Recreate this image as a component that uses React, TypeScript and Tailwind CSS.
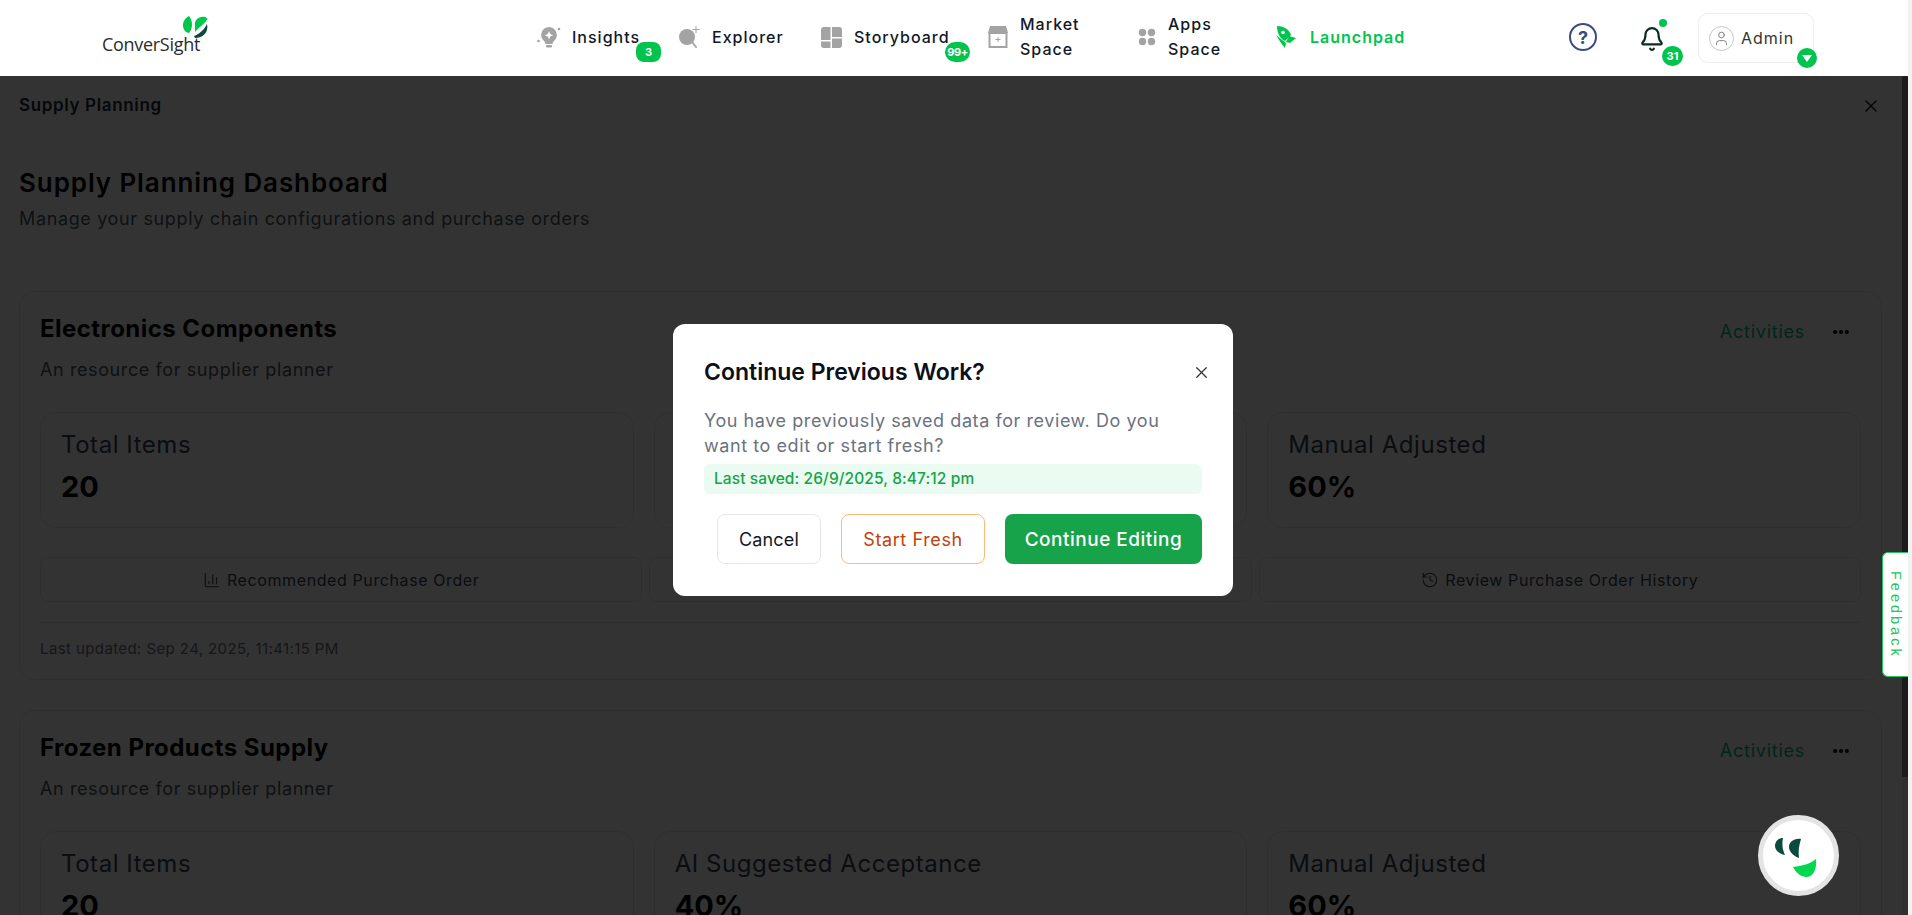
import { BarChart3, ClipboardList, History, X, MoreHorizontal, Bell, User } from "lucide-react";

const font = "font-['Inter','Noto_Sans',sans-serif]";

function Logo() {
  return (
    <div className="relative w-[110px] h-[42px]">
      <span className="absolute left-0 top-[17px] text-[18px] leading-[22px] tracking-[-0.3px] text-[#2b2b2b] font-['Open_Sans',sans-serif]">ConverSight</span>
      <svg className="absolute left-[79px] top-0" width="30" height="30" viewBox="0 0 30 30">
        <path d="M8 0 C2 3 0 10 4 15 C5 16 7 17 8 17 C12 12 12 5 8 0Z" fill="#00c64a" />
        <path d="M14 10 C13 5 17 0 24 1 C27 2 27 3 25 5 C22 9 18 11 14 16Z" fill="#00c64a" />
        <path d="M26 8 C28 16 22 22 14 22 L13 20 C18 18 23 14 26 8Z" fill="#0b4a3a" />
      </svg>
    </div>
  );
}

function Badge({ text, className }: { text: string; className: string }) {
  return (
    <span className={"absolute flex items-center justify-center bg-[#00c44d] text-white text-[11px] font-bold " + className}>
      {text}
    </span>
  );
}

function InsightsIcon() {
  return (
    <svg width="24" height="24" viewBox="0 0 24 24">
      <path d="M12 2a8 8 0 0 0-5 14c1 1 1.500 2 1.500 3h7c0-1 .5-2 1.500-3a8 8 0 0 0-5-14z" fill="#a3a3a3" />
      <path d="M12 6l1.200 3 3 1.200-3 1.200-1.200 3-1.200-3-3-1.200 3-1.200z" fill="#fff" />
      <rect x="9" y="20" width="6" height="2.500" rx="1" fill="#a3a3a3" />
      <circle cx="1.500" cy="16" r="1.300" fill="#a3a3a3" />
      <circle cx="22" cy="4" r="1.300" fill="#a3a3a3" />
    </svg>
  );
}

function ExplorerIcon() {
  return (
    <svg width="24" height="24" viewBox="0 0 24 24">
      <circle cx="10" cy="12" r="8" fill="#a3a3a3" />
      <path d="M15 17l4 5" stroke="#a3a3a3" strokeWidth="2" strokeLinecap="round" />
      <path d="M19 1v7M15.500 4.500h7" stroke="#a3a3a3" strokeWidth="1" />
    </svg>
  );
}

function StoryboardIcon() {
  return (
    <svg width="21" height="21" viewBox="0 0 21 21">
      <path d="M3 0h6.500v13H0V3a3 3 0 0 1 3-3z" fill="#a3a3a3" />
      <path d="M11 0h7a3 3 0 0 1 3 3v7H11z" fill="#a3a3a3" />
      <path d="M11 11.500h10V18a3 3 0 0 1-3 3h-7z" fill="#a3a3a3" />
      <path d="M0 14.500h9.500V21H3a3 3 0 0 1-3-3z" fill="#a3a3a3" />
    </svg>
  );
}

function MarketIcon() {
  return (
    <svg width="20" height="22" viewBox="0 0 20 22">
      <path d="M2 0h16l2 7H0z" fill="#a3a3a3" />
      <rect x="1.500" y="7" width="17" height="14" fill="#fff" stroke="#a3a3a3" strokeWidth="2" />
      <path d="M10 11v5M7.500 13.500h5" stroke="#a3a3a3" strokeWidth="1" />
    </svg>
  );
}

function AppsIcon() {
  return (
    <svg width="18" height="18" viewBox="0 0 18 18" fill="#a3a3a3">
      <circle cx="4.500" cy="4.500" r="3.700" />
      <circle cx="13.500" cy="4.500" r="3.700" />
      <circle cx="4.500" cy="13.500" r="3.700" />
      <circle cx="13.500" cy="13.500" r="3.700" />
    </svg>
  );
}

function RocketIcon() {
  return (
    <svg width="21" height="22" viewBox="0 0 21 22">
      <path d="M1 0c6 0 12 3 14 9l-6 6C4 13 1 7 1 0z" fill="#00c44d" />
      <path d="M0 9l5 8 4 5 1-5z" fill="#00c44d" />
      <path d="M13 10l7 2-6 5-4-1z" fill="#00c44d" />
      <circle cx="7" cy="6.500" r="1.800" fill="#fff" />
    </svg>
  );
}

const navText = "text-[16px] font-medium text-[#111827] tracking-[1px] whitespace-nowrap";

function Header() {
  return (
    <header className="h-[76px] shrink-0 bg-white flex items-center pb-[2px]">
      <div className="ml-[102px] w-[435px]">
        <Logo />
      </div>
      <div className="w-[140px] flex items-center gap-[11px] relative">
        <InsightsIcon />
        <span className={navText}>Insights</span>
        <Badge text="3" className="left-[99px] top-[17px] w-[25px] h-[20px] rounded-[8px]" />
      </div>
      <div className="w-[144px] flex items-center gap-[11px]">
        <ExplorerIcon />
        <span className={navText}>Explorer</span>
      </div>
      <div className="w-[167px] flex items-center gap-[12px] relative">
        <StoryboardIcon />
        <span className={navText}>Storyboard</span>
        <Badge text="99+" className="left-[124px] top-[17px] w-[25px] h-[20px] rounded-[10px] tracking-[-0.5px]" />
      </div>
      <div className="w-[150px] flex items-center gap-[12px]">
        <MarketIcon />
        <span className="text-[16px] leading-[25px] font-medium text-[#111827] tracking-[1px] w-[70px]">Market Space</span>
      </div>
      <div className="w-[138px] flex items-center gap-[12px]">
        <AppsIcon />
        <span className="text-[16px] leading-[25px] font-medium text-[#111827] tracking-[1px] w-[60px]">Apps Space</span>
      </div>
      <div className="w-[293px] flex items-center gap-[13px]">
        <RocketIcon />
        <span className="text-[16px] font-semibold text-[#00c44d] tracking-[1px]">Launchpad</span>
      </div>
      <div className="w-[68px] flex justify-start">
        <div className="w-[28px] h-[28px] rounded-full border-[2.5px] border-[#3b4a82] flex items-center justify-center text-[#3b4a82] text-[18px] font-bold">?</div>
      </div>
      <div className="relative w-[61px] h-[40px] flex items-start">
        <Bell className="ml-[2px] mt-[9px] text-[#0b2e24]" size={26} strokeWidth={2} />
        <span className="absolute left-[22px] top-[2px] w-[8px] h-[8px] rounded-full bg-[#00c44d]" />
        <Badge text="31" className="left-[25px] top-[29px] w-[21px] h-[20px] rounded-full" />
      </div>
      <div className="relative w-[116px] h-[50px] mt-[2px] border border-[#ececec] rounded-[10px] flex items-center pl-[10px] gap-[7px]">
        <span className="w-[25px] h-[25px] rounded-full border border-[#c8c8c8] flex items-center justify-center">
          <User size={17} strokeWidth={1.3} className="text-[#777]" />
        </span>
        <span className="text-[16px] text-[#333] tracking-[1px]">Admin</span>
        <span className="absolute left-[98px] top-[34px] w-[20px] h-[20px] rounded-full bg-[#00c44d] flex items-center justify-center">
          <span className="w-0 h-0 border-l-[5px] border-r-[5px] border-t-[7px] border-l-transparent border-r-transparent border-t-white" />
        </span>
      </div>
    </header>
  );
}

function Stat({ label, value }: { label: string; value: string }) {
  return (
    <div className="h-[116px] border border-gray-200 rounded-2xl pl-[20px] pt-[18px]">
      <div className="text-[24px] leading-[28px] text-[#374151] tracking-[0.55px]">{label}</div>
      <div className="text-[29px] leading-[36px] mt-[10px] font-bold text-black">{value}</div>
    </div>
  );
}

function ActionButton({ icon, label }: { icon: React.ReactNode; label: string }) {
  return (
    <div className="h-[45px] border border-gray-200 rounded-lg flex items-center justify-center gap-[6px] text-[16px] text-[#374151] tracking-[0.6px]">
      {icon}
      <span>{label}</span>
    </div>
  );
}

function ResourceCard({ title }: { title: string }) {
  return (
    <section className="border border-gray-200 rounded-2xl h-[389px] mb-[30px] shrink-0 px-[20px] pt-[19px]">
      <div className="flex items-start justify-between">
        <div>
          <h2 className="text-[24px] leading-[36px] font-bold text-black tracking-[0.45px]">{title}</h2>
          <p className="mt-[10px] text-[18px] leading-[26px] text-[#4b5563] tracking-[0.6px]">An resource for supplier planner</p>
        </div>
        <div className="flex items-center gap-[26px] mt-[8px] pr-[10px]">
          <span className="text-[18px] leading-[26px] text-[#05b884] tracking-[0.75px]">Activities</span>
          <MoreHorizontal size={20} strokeWidth={3} className="text-black" />
        </div>
      </div>
      <div className="grid grid-cols-3 gap-5 mt-[29px]">
        <Stat label="Total Items" value="20" />
        <Stat label="AI Suggested Acceptance" value="40%" />
        <Stat label="Manual Adjusted" value="60%" />
      </div>
      <div className="grid grid-cols-3 gap-[7px] mt-[29px]">
        <ActionButton icon={<BarChart3 size={18} strokeWidth={1.5} />} label="Recommended Purchase Order" />
        <ActionButton icon={<ClipboardList size={18} strokeWidth={1.5} />} label="Review Purchase Order" />
        <ActionButton icon={<History size={18} strokeWidth={1.5} />} label="Review Purchase Order History" />
      </div>
      <div className="border-t border-gray-200 mt-[20px] pt-[15px] text-[15px] leading-[22px] text-[#6b7280] tracking-[0.4px]">
        Last updated: Sep 24, 2025, 11:41:15 PM
      </div>
    </section>
  );
}

function Modal() {
  return (
    <div className="absolute left-[673px] top-[324px] z-30 w-[560px] h-[272px] bg-white rounded-xl px-[31px] pt-[30px]">
      <div className="flex items-center justify-between h-[36px]">
        <h3 className="text-[23px] font-semibold tracking-[0px] text-[#0b0f19]">Continue Previous Work?</h3>
        <X size={19} strokeWidth={1.5} className="text-[#333] -mr-[9px]" />
      </div>
      <p className="mt-[18px] text-[18px] leading-[25px] text-[#6b7280] tracking-[0.57px]">
        You have previously saved data for review. Do you want to edit or start fresh?
      </p>
      <div className="mt-[6px] h-[30px] bg-[#ecfbf2] rounded-md flex items-center pl-[10px] text-[15.5px] font-medium text-[#16a34a] tracking-[0.1px]">
        Last saved: 26/9/2025, 8:47:12 pm
      </div>
      <div className="flex justify-end gap-5 mt-[20px]">
        <button className="w-[104px] h-[50px] bg-white border border-gray-200 rounded-lg text-[18px] tracking-[0.2px] text-[#111827]">Cancel</button>
        <button className="w-[144px] h-[50px] bg-white border border-[#fdba74] rounded-lg pt-[1px] text-[18px] tracking-[0.6px] text-[#c2410c]">Start Fresh</button>
        <button className="w-[197px] h-[50px] bg-[#16a34a] rounded-lg pt-[2px] text-[19px] tracking-[0.5px] font-medium text-white">Continue Editing</button>
      </div>
    </div>
  );
}

function Bot() {
  return (
    <div className="absolute left-[1758px] top-[815px] z-30 w-[81px] h-[81px] rounded-full bg-white border-[5px] border-[#e4e4e4] flex items-center justify-center">
      <svg width="50" height="50" viewBox="0 0 50 50">
        <path d="M9 7C3 7 1 12 1 15C1 19 5 23 11 24C8 18 8 12 9 7Z" fill="#0b4a3c" />
        <path d="M27 8C20 7 15 11 15 16C15 21 20 25 25 27C24 21 25 14 27 8Z" fill="#0b4a3c" />
        <path d="M42 28C36 33 28 35 19 36C22 42 27 46 33 46C40 46 43 36 42 28Z" fill="#00d94f" />
      </svg>
    </div>
  );
}

export default function App() {
  return (
    <div className={"relative w-[1912px] h-[915px] overflow-hidden bg-[#f2f2f2] " + font}>
      <div className="w-[1908px] h-[915px] flex flex-col">
        <Header />
        <div className="relative flex-1 flex overflow-hidden">
          <main className="w-[1902px] shrink-0 bg-white">
            <div className="h-[59px] flex items-center justify-between pl-[19px] pr-[21px]">
              <span className="text-[17px] font-semibold text-[#1f2937] tracking-[0.65px]">Supply Planning</span>
              <X size={20} strokeWidth={1.5} className="text-black" />
            </div>
            <div className="pl-[19px] pr-[20px] pt-[28px] flex flex-col">
              <h1 className="text-[26px] leading-[40px] font-semibold text-black tracking-[0.9px]">Supply Planning Dashboard</h1>
              <p className="text-[18px] leading-[28px] text-[#4b5563] tracking-[0.64px] mt-[2px] mb-[58px]">Manage your supply chain configurations and purchase orders</p>
              <ResourceCard title="Electronics Components" />
              <ResourceCard title="Frozen Products Supply" />
            </div>
          </main>
          <div className="w-[6px] bg-[#e8e8e8]">
            <div className="h-[701px] rounded-t-sm bg-[#8c8c8c]" />
          </div>
          <div className="absolute inset-0 bg-black/80" />
        </div>
      </div>
      <Modal />
      <div className="absolute left-[1882px] top-[552px] z-30 w-[26px] h-[125px] bg-white border border-[#22c55e] border-r-0 rounded-l-md flex items-center justify-center">
        <span className="[writing-mode:vertical-rl] text-[14.5px] tracking-[3px] text-[#22c55e] font-['Liberation_Sans',sans-serif]">Feedback</span>
      </div>
      <Bot />
    </div>
  );
}
